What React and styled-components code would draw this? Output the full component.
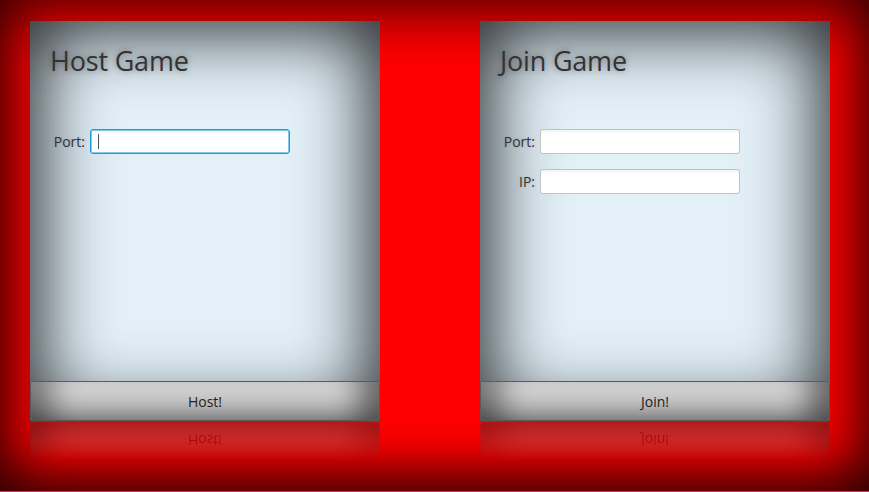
import React from "react";
import styled, { createGlobalStyle } from "styled-components";

const GlobalStyle = createGlobalStyle`
  html, body {
    margin: 0;
    padding: 0;
    overflow: hidden;
  }
  body {
    font-family: "Open Sans", "Noto Sans", sans-serif;
  }
`;

const Stage = styled.div`
  width: 869px;
  height: 492px;
  box-sizing: border-box;
  background: #ff0000;
  box-shadow: inset 0 0 60px 8px rgba(0, 0, 0, 0.8), inset 0 -30px 40px -10px rgba(0, 0, 0, 0.3);
  border-bottom: 1px solid #d8287c;
  display: flex;
  gap: 100px;
  padding: 21px 0 0 30px;
`;

const Column = styled.div`
  width: 350px;
  display: flex;
  flex-direction: column;
`;

const Card = styled.div`
  height: 400px;
  display: flex;
  flex-direction: column;
  background: #e3f0f8;
  box-shadow: inset 0 0 70px 12px rgba(40, 44, 47, 1);
`;

const Body = styled.div`
  flex: 1;
  padding: 23px 20px 0 20px;
`;

const Title = styled.h1`
  margin: 0;
  font-size: 27px;
  font-weight: 400;
  line-height: 33px;
  letter-spacing: -0.2px;
  color: #333;
  text-shadow: 0 0 6px rgba(0, 0, 0, 0.4);
`;

const Form = styled.div`
  display: grid;
  grid-template-columns: 35px 200px;
  column-gap: 5px;
  row-gap: 15px;
  align-items: center;
  margin-top: 52px;
`;

const Label = styled.label`
  justify-self: end;
  font-size: 14px;
  color: #333;
  text-shadow: 0 0 3px rgba(0, 0, 0, 0.15);
`;

const Field = styled.div`
  height: 25px;
  box-sizing: border-box;
  border-radius: 3px;
  background: linear-gradient(#f2f2f2, #ffffff 4px);
  border: 1px solid ${(p) => (p.$focused ? "#1b9fd6" : "#c2c2c2")};
  box-shadow: ${(p) => (p.$focused ? "0 0 0 1px #7fc8ea inset" : "none")};
  display: flex;
  align-items: center;
  padding-left: 7px;
`;

const Caret = styled.span`
  width: 1px;
  height: 15px;
  background: #555;
`;

const Button = styled.div`
  height: 40px;
  box-sizing: border-box;
  border: 1px solid #585c5f;
  border-radius: 3px;
  background: linear-gradient(#e2e2e2, #a8a8a8);
  box-shadow: inset 34px 0 30px -14px rgba(0, 0, 0, 0.45),
    inset -34px -8px 30px -14px rgba(0, 0, 0, 0.5);
  display: flex;
  align-items: center;
  justify-content: center;
  font-size: 14px;
  color: #222;
`;

const Reflection = styled(Button)`
  margin-top: 1px;
  height: 38px;
  transform: scaleY(-1);
  opacity: 0.45;
  background: linear-gradient(#a0a0a0, #606060);
  border-color: #6a3030;
  -webkit-mask-image: linear-gradient(to top, #000 0%, rgba(0, 0, 0, 0.7) 50%, transparent 100%);
  mask-image: linear-gradient(to top, #000 0%, rgba(0, 0, 0, 0.7) 50%, transparent 100%);
`;

const Panel = ({ title, fields, action }) => (
  <Column>
    <Card>
      <Body>
        <Title>{title}</Title>
        <Form>
          {fields.map((f) => (
            <React.Fragment key={f.label}>
              <Label>{f.label}</Label>
              <Field $focused={f.focused}>{f.focused && <Caret />}</Field>
            </React.Fragment>
          ))}
        </Form>
      </Body>
      <Button>{action}</Button>
    </Card>
    <Reflection aria-hidden="true">{action}</Reflection>
  </Column>
);

export default function App() {
  return (
    <>
      <GlobalStyle />
      <Stage>
        <Panel
          title="Host Game"
          fields={[{ label: "Port:", focused: true }]}
          action="Host!"
        />
        <Panel
          title="Join Game"
          fields={[{ label: "Port:" }, { label: "IP:" }]}
          action="Join!"
        />
      </Stage>
    </>
  );
}
